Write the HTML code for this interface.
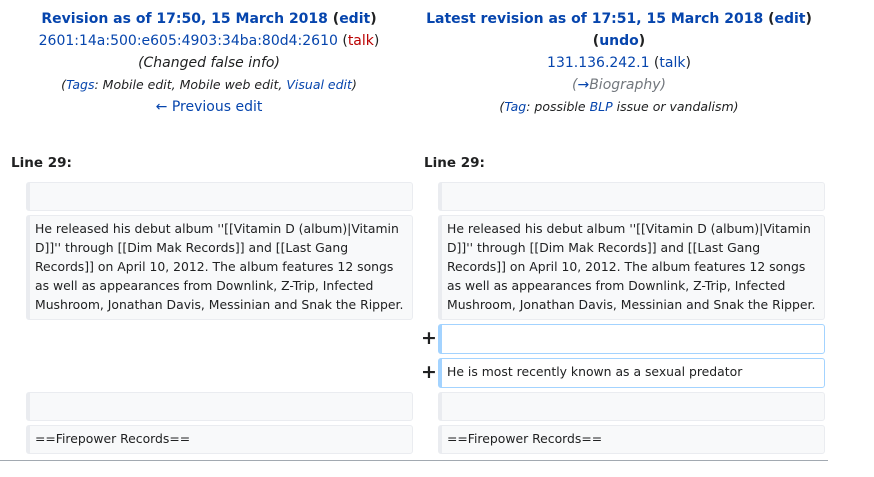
<!DOCTYPE html>
<html><head><meta charset="utf-8"><style>
body{margin:0;width:874px;height:477px;background:#fff;font-family:"DejaVu Sans","Liberation Sans",sans-serif;color:#202122;position:relative;overflow:hidden}
.h{position:absolute;text-align:center;width:410px;line-height:22px;font-size:14px}
.h div{height:22px;white-space:nowrap}
a{color:#0645ad;text-decoration:none}
.b{font-weight:bold}
.i{font-style:italic;font-size:12.5px}
.ln{position:absolute;top:155px;font-weight:bold;font-size:13.5px}
.c{position:absolute;box-sizing:border-box;width:387px;background:#f8f9fa;border:1px solid #eaecf0;border-left:4px solid #eaecf0;border-radius:3px;font-size:12.4px;line-height:19.1px;padding:3px 5px 4px 5px;white-space:nowrap}
.add{background:#fff;border-color:#a3d3ff}
.p{position:absolute;left:421px;font-size:19px;font-weight:bold;line-height:20px;color:#202122}
</style></head><body>
<div class="h" style="left:4px;top:8px">
<div class="b"><a>Revision as of 17:50, 15 March 2018</a> (<a>edit</a>)</div>
<div><a>2601:14a:500:e605:4903:34ba:80d4:2610</a> (<a style="color:#ba0000">talk</a>)</div>
<div style="font-style:italic">(Changed false info)</div>
<div class="i">(<a>Tags</a>: Mobile edit, Mobile web edit, <a>Visual edit</a>)</div>
<div><a>← Previous edit</a></div>
</div>
<div class="h" style="left:414px;top:8px">
<div class="b"><a>Latest revision as of 17:51, 15 March 2018</a> (<a>edit</a>)</div>
<div class="b">(<a>undo</a>)</div>
<div><a>131.136.242.1</a> (<a>talk</a>)</div>
<div style="font-style:italic;color:#72777d">(<a>→</a>Biography)</div>
<div class="i">(<a>Tag</a>: possible <a>BLP</a> issue or vandalism)</div>
</div>
<div class="ln" style="left:11px">Line 29:</div>
<div class="ln" style="left:424px">Line 29:</div>

<div class="c" style="left:26px;top:182px;height:29px"></div>
<div class="c" style="left:26px;top:215px;height:105px">He released his debut album ''[[Vitamin D (album)|Vitamin<br>D]]'' through [[Dim Mak Records]] and [[Last Gang<br>Records]] on April 10, 2012. The album features 12 songs<br>as well as appearances from Downlink, Z-Trip, Infected<br>Mushroom, Jonathan Davis, Messinian and Snak the Ripper.</div>
<div class="c" style="left:26px;top:392px;height:29px"></div>
<div class="c" style="left:26px;top:425px;height:29px;padding-top:3px">==Firepower Records==</div>

<div class="c" style="left:438px;top:182px;height:29px"></div>
<div class="c" style="left:438px;top:215px;height:105px">He released his debut album ''[[Vitamin D (album)|Vitamin<br>D]]'' through [[Dim Mak Records]] and [[Last Gang<br>Records]] on April 10, 2012. The album features 12 songs<br>as well as appearances from Downlink, Z-Trip, Infected<br>Mushroom, Jonathan Davis, Messinian and Snak the Ripper.</div>
<div class="p" style="top:328px">+</div>
<div class="c add" style="left:438px;top:324px;height:30px"></div>
<div class="p" style="top:362px">+</div>
<div class="c add" style="left:438px;top:358px;height:30px;padding-top:3px">He is most recently known as a sexual predator</div>
<div class="c" style="left:438px;top:392px;height:29px"></div>
<div class="c" style="left:438px;top:425px;height:29px;padding-top:3px">==Firepower Records==</div>

<div style="position:absolute;left:0;top:460px;width:828px;height:1px;background:#a2a9b1"></div>
</body></html>
